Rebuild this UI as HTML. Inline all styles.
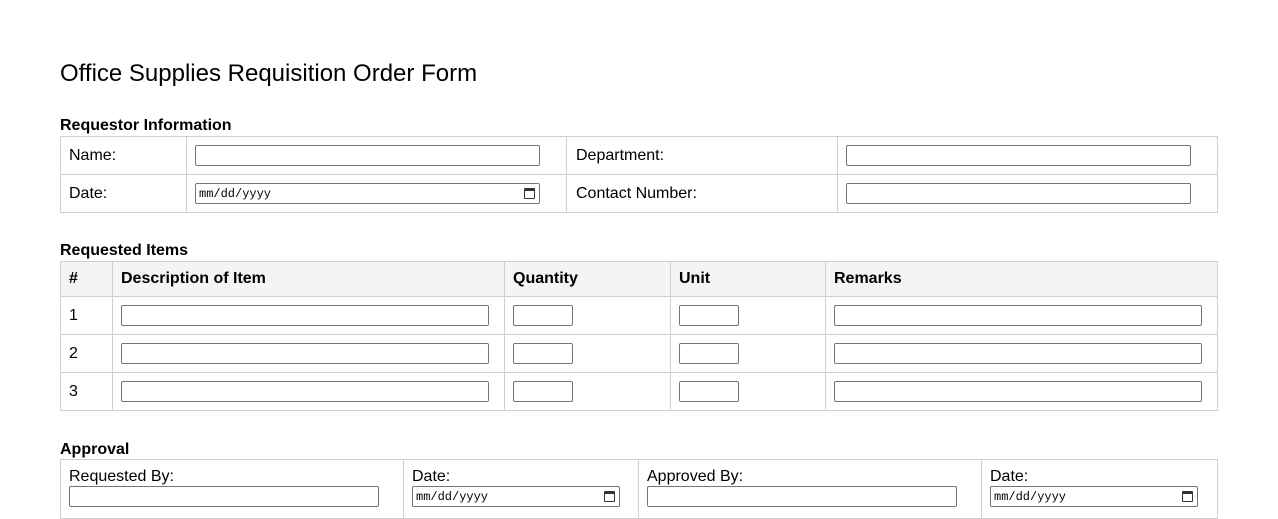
<!DOCTYPE html>
<html><head><meta charset="utf-8"><style>
*{box-sizing:border-box;margin:0;padding:0}
body{width:1278px;height:501px;overflow:hidden;background:#fff;font-family:"Liberation Sans",Arial,sans-serif;color:#000;position:relative}
.a{position:absolute}
.t{font-size:16px;line-height:18px;white-space:nowrap}
.b{font-weight:bold}
.box{position:absolute;border:1px solid #d0d0d0}
.hl{position:absolute;height:1px;background:#d0d0d0}
.vl{position:absolute;width:1px;background:#d0d0d0}
.in{position:absolute;border:1px solid #767676;border-radius:2px;height:21px;background:#fff}
.dt{font-family:"Liberation Mono",monospace;font-size:12px;line-height:21px;padding-left:3px;color:#000}
.cal{position:absolute;right:4px;top:4px;width:11px;height:11px;border:1.5px solid #333;border-top-width:3px;border-radius:1px}
</style></head><body>
<div class="a" style="left:60px;top:60px;font-size:24px;line-height:28px">Office Supplies Requisition Order Form</div>

<div class="a t b" style="left:60px;top:117px">Requestor Information</div>
<div class="box" style="left:60px;top:136px;width:1158px;height:77px"></div>
<div class="hl" style="left:60px;top:174px;width:1158px"></div>
<div class="vl" style="left:186px;top:136px;height:77px"></div>
<div class="vl" style="left:566px;top:136px;height:77px"></div>
<div class="vl" style="left:837px;top:136px;height:77px"></div>
<div class="a t" style="left:69px;top:147px">Name:</div>
<div class="a t" style="left:69px;top:185px">Date:</div>
<div class="a t" style="left:576px;top:147px">Department:</div>
<div class="a t" style="left:576px;top:185px">Contact Number:</div>
<div class="in" style="left:195px;top:145px;width:345px"></div>
<div class="in dt" style="left:195px;top:183px;width:345px">mm/dd/yyyy<span class="cal"></span></div>
<div class="in" style="left:846px;top:145px;width:345px"></div>
<div class="in" style="left:846px;top:183px;width:345px"></div>

<div class="a t b" style="left:60px;top:242px">Requested Items</div>
<div class="a" style="left:60px;top:261px;width:1158px;height:35px;background:#f4f4f4"></div>
<div class="box" style="left:60px;top:261px;width:1158px;height:150px"></div>
<div class="hl" style="left:60px;top:296px;width:1158px"></div>
<div class="hl" style="left:60px;top:334px;width:1158px"></div>
<div class="hl" style="left:60px;top:372px;width:1158px"></div>
<div class="vl" style="left:112px;top:261px;height:150px"></div>
<div class="vl" style="left:504px;top:261px;height:150px"></div>
<div class="vl" style="left:670px;top:261px;height:150px"></div>
<div class="vl" style="left:825px;top:261px;height:150px"></div>
<div class="a t b" style="left:69px;top:270px">#</div>
<div class="a t b" style="left:121px;top:270px">Description of Item</div>
<div class="a t b" style="left:513px;top:270px">Quantity</div>
<div class="a t b" style="left:679px;top:270px">Unit</div>
<div class="a t b" style="left:834px;top:270px">Remarks</div>

<div class="a t" style="left:69px;top:307px">1</div>
<div class="a t" style="left:69px;top:345px">2</div>
<div class="a t" style="left:69px;top:383px">3</div>
<div class="in" style="left:121px;top:305px;width:368px"></div>
<div class="in" style="left:513px;top:305px;width:60px"></div>
<div class="in" style="left:679px;top:305px;width:60px"></div>
<div class="in" style="left:834px;top:305px;width:368px"></div>
<div class="in" style="left:121px;top:343px;width:368px"></div>
<div class="in" style="left:513px;top:343px;width:60px"></div>
<div class="in" style="left:679px;top:343px;width:60px"></div>
<div class="in" style="left:834px;top:343px;width:368px"></div>
<div class="in" style="left:121px;top:381px;width:368px"></div>
<div class="in" style="left:513px;top:381px;width:60px"></div>
<div class="in" style="left:679px;top:381px;width:60px"></div>
<div class="in" style="left:834px;top:381px;width:368px"></div>

<div class="a t b" style="left:60px;top:441px">Approval</div>
<div class="box" style="left:60px;top:459px;width:1158px;height:60px"></div>
<div class="vl" style="left:403px;top:459px;height:60px"></div>
<div class="vl" style="left:638px;top:459px;height:60px"></div>
<div class="vl" style="left:981px;top:459px;height:60px"></div>
<div class="a t" style="left:69px;top:468px">Requested By:</div>
<div class="a t" style="left:412px;top:468px">Date:</div>
<div class="a t" style="left:647px;top:468px">Approved By:</div>
<div class="a t" style="left:990px;top:468px">Date:</div>
<div class="in" style="left:69px;top:486px;width:310px"></div>
<div class="in dt" style="left:412px;top:486px;width:208px">mm/dd/yyyy<span class="cal"></span></div>
<div class="in" style="left:647px;top:486px;width:310px"></div>
<div class="in dt" style="left:990px;top:486px;width:208px">mm/dd/yyyy<span class="cal"></span></div>
</body></html>
